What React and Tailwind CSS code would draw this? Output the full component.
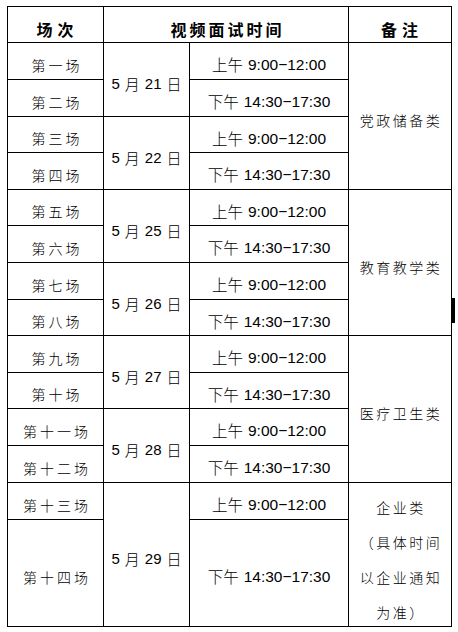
import React from "react";

const CJK = "font-['Noto_Sans_CJK_SC',sans-serif]";
const MIX = "font-['Liberation_Sans','Noto_Sans_CJK_SC',sans-serif]";

function Cell({ children, className = "" }) {
  return (
    <div className={"bg-white flex items-center justify-center text-black " + className}>
      {children}
    </div>
  );
}

function Session({ name }) {
  return (
    <Cell className={"pt-[8px] pl-[3px] text-[14px] tracking-[3px] font-light " + CJK}>
      {name}
    </Cell>
  );
}

function Time({ am }) {
  return (
    <Cell className={"pt-[8px] text-[15.5px] " + MIX}>
      <span className={"font-light mr-[5px] " + CJK}>{am ? "上午" : "下午"}</span>
      <span>{am ? "9:00−12:00" : "14:30−17:30"}</span>
    </Cell>
  );
}

function DateCell({ day }) {
  return (
    <Cell className={"row-span-2 pt-[10px] text-[15px] " + MIX}>
      <span>5</span>
      <span className={"font-light mx-[5px] " + CJK}>月</span>
      <span>{day}</span>
      <span className={"font-light ml-[5px] " + CJK}>日</span>
    </Cell>
  );
}

function Note({ text }) {
  return (
    <Cell className={"row-span-4 pt-[9px] pl-[2px] text-[14px] tracking-[2.5px] font-light " + CJK}>
      {text}
    </Cell>
  );
}

const days = ["21", "22", "25", "26", "27", "28", "29"];
const notes = { 0: "党政储备类", 2: "教育教学类", 4: "医疗卫生类" };

export default function App() {
  return (
    <div className="relative w-[458px] h-[632px] bg-white overflow-hidden">
      <div className="pt-[6px] pl-[7px]">
        <div className="grid bg-black p-px gap-px w-[445px] grid-cols-[95px_85px_158px_102px] grid-rows-[35px_36px_36px_35px_36px_35px_36px_36px_35px_36px_35px_36px_36px_36px_106px]">
          <Cell className={"pt-[8px] pl-[4px] text-[16px] font-bold tracking-[5px] " + CJK}>场次</Cell>
          <Cell className={"col-span-2 pt-[8px] pl-[3px] text-[16px] font-bold tracking-[3px] " + CJK}>
            视频面试时间
          </Cell>
          <Cell className={"pt-[8px] pl-[4px] text-[16px] font-bold tracking-[5px] " + CJK}>备注</Cell>

          {days.map((d, i) => {
            const n1 = i * 2 + 1;
            const n2 = i * 2 + 2;
            const names = ["一", "二", "三", "四", "五", "六", "七", "八", "九", "十", "十一", "十二", "十三", "十四"];
            return (
              <React.Fragment key={d}>
                <Session name={"第" + names[n1 - 1] + "场"} />
                <DateCell day={d} />
                <Time am />
                {notes[i] && <Note text={notes[i]} />}
                {i === 6 && (
                  <Cell className={"row-span-2 pt-[10px] text-[14px] tracking-[2.5px] font-light leading-[35px] " + CJK}>
                    <div className="flex flex-col items-center">
                      <span className="pl-[2px]">企业类</span>
                      <span className="pl-[2px]">（具体时间</span>
                      <span className="pl-[2px]">以企业通知</span>
                      <span className="pl-[2px]">为准）</span>
                    </div>
                  </Cell>
                )}
                <Session name={"第" + names[n2 - 1] + "场"} />
                <Time />
              </React.Fragment>
            );
          })}
        </div>
      </div>
      <div className="absolute left-[452px] top-[298px] w-[3px] h-[25px] bg-black" />
    </div>
  );
}
